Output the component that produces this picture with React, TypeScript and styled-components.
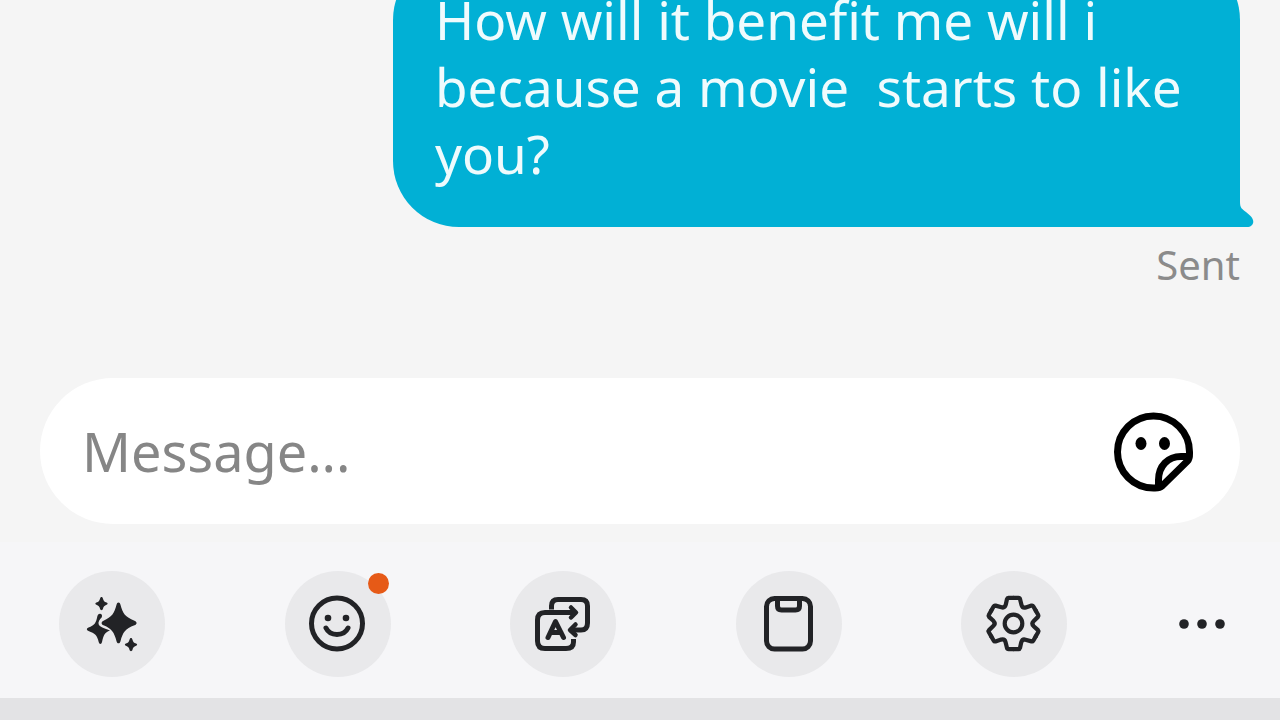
import React from "react";
import styled, { createGlobalStyle } from "styled-components";

const GlobalStyle = createGlobalStyle`
  *, *::before, *::after { box-sizing: border-box; }
  body {
    margin: 0;
    background: #f5f5f5;
    font-family: "Noto Sans", "Open Sans", sans-serif;
  }
`;

const Screen = styled.div`
  display: flex;
  flex-direction: column;
  height: 100vh;
  overflow: hidden;
`;

const Conversation = styled.main`
  flex: 1;
  min-height: 0;
  display: flex;
  flex-direction: column;
  justify-content: flex-end;
  align-items: flex-end;
  padding: 0 40px 85px;
  overflow: hidden;
`;

const Bubble = styled.div`
  position: relative;
  flex: none;
  max-width: 847px;
  padding: 32px 42px 40px;
  border-radius: 66px 66px 0 66px;
  background: #01b0d5;
`;

const BubbleText = styled.p`
  margin: 0;
  color: #effbfd;
  font-size: 53px;
  line-height: 67px;
  white-space: pre-wrap;
`;

const BubbleTail = styled.svg`
  position: absolute;
  right: -14px;
  bottom: 0;
`;

const Status = styled.span`
  flex: none;
  margin-top: 10px;
  color: #8b8b8b;
  font-size: 40px;
  line-height: 56px;
`;

const Composer = styled.form`
  flex: none;
  display: flex;
  align-items: center;
  height: 146px;
  margin: 0 40px;
  padding: 0 44px 0 42px;
  border-radius: 73px;
  background: #ffffff;
`;

const MessageInput = styled.input`
  flex: 1;
  min-width: 0;
  padding: 0;
  border: 0;
  outline: 0;
  background: transparent;
  color: #222222;
  font: inherit;
  font-size: 54px;
  line-height: 74px;
  &::placeholder { color: #868686; opacity: 1; }
`;

const PlainButton = styled.button`
  display: flex;
  align-items: center;
  justify-content: center;
  padding: 0;
  border: 0;
  background: transparent;
  color: #000000;
`;

const Toolbar = styled.div`
  flex: none;
  display: flex;
  align-items: center;
  gap: 105px;
  margin-top: 18px;
  padding: 29px 48px 21px 59px;
  background: #f6f6f8;
`;

const ToolGroup = styled.div`
  flex: 1;
  display: flex;
  justify-content: space-between;
`;

const ToolButton = styled(PlainButton)`
  position: relative;
  width: 106px;
  height: 106px;
  border-radius: 50%;
  background: #e9e9eb;
  color: #222326;
`;

const MoreButton = styled(PlainButton)`
  width: 60px;
  height: 106px;
  color: #222326;
`;

const Badge = styled.span`
  position: absolute;
  top: 2px;
  right: 2px;
  width: 21px;
  height: 21px;
  border-radius: 50%;
  background: #e65a17;
`;

const KeyboardEdge = styled.div`
  flex: none;
  height: 22px;
  background: #e3e3e5;
`;

const iconProps = {
  width: 60,
  height: 60,
  viewBox: "0 0 60 60",
  fill: "none",
  stroke: "currentColor",
  strokeWidth: 5,
  strokeLinecap: "round" as const,
  strokeLinejoin: "round" as const,
  "aria-hidden": true,
};

const StickerIcon = () => (
  <svg width="84" height="84" viewBox="0 -1 84 84" fill="none" stroke="currentColor" strokeWidth="7" strokeLinejoin="round" aria-hidden="true">
    <path d="M77.500 42A36 36 0 1 0 41.500 78C44 78 47.500 78.500 50 76L75.500 51C78 48.500 77.500 45 77.500 42Z" />
    <path d="M46.500 77V70C46.500 56 56 46.500 69 46.500H77" />
    <ellipse cx="29" cy="33.500" rx="5.500" ry="6.500" fill="currentColor" stroke="none" />
    <ellipse cx="52.500" cy="33.500" rx="5.500" ry="6.500" fill="currentColor" stroke="none" />
  </svg>
);

const SparklesIcon = () => (
  <svg {...iconProps} viewBox="-1 0 60 60" fill="currentColor" stroke="none">
    <path d="M35.500 8.500C36.600 8.500 37 9.400 37.400 10.600C40 20 42 23 51.500 26.700C54.300 27.800 54.300 30.200 51.500 31.300C42 35 40 38 37.400 47.400C36.700 50 34.300 50 33.600 47.400C31 38 29 35 20.500 31.300C18 30.200 18 27.800 20.500 26.700C29 23 31 20 33.600 10.600C34 9.400 34.400 8.500 35.500 8.500Z" />
    <path d="M17 19.800C18.600 19.800 19.500 21.300 18.800 23.200C16.500 25.500 15 28 15.600 30C16.200 32.500 20 34 27 36.500C21.500 38.500 20.500 41.500 19 48C18.500 50.500 16.300 50.500 15.700 48C14 41 12 39.500 5.500 37C3.300 36 3.300 34.500 5.500 33.500C11.500 31.500 13 29 14.300 22.500C14.600 21 15.500 19.800 17 19.800Z" />
    <path d="M18.500 3C19.300 3 19.700 3.600 19.900 4.500C20.600 7 21.300 7.700 23.600 8.500C25 9 25 10.300 23.600 10.800C21.300 11.600 20.600 12.500 19.900 15C19.500 16.500 17.500 16.500 17.100 15C16.400 12.500 15.700 11.600 13.400 10.800C12 10.300 12 9 13.400 8.500C15.700 7.700 16.400 7 17.100 4.500C17.300 3.600 17.700 3 18.500 3Z" />
    <path d="M48 44C48.800 44 49.200 44.600 49.400 45.500C50.100 48 50.800 48.700 53.100 49.500C54.500 50 54.500 51.300 53.100 51.800C50.800 52.600 50.100 53.500 49.400 56C49 57.500 47 57.500 46.600 56C45.900 53.500 45.200 52.600 42.900 51.800C41.500 51.300 41.500 50 42.900 49.500C45.200 48.700 45.900 48 46.600 45.500C46.800 44.600 47.200 44 48 44Z" />
  </svg>
);

const SmileIcon = () => (
  <svg {...iconProps}>
    <circle cx="29" cy="29.500" r="25.500" />
    <path d="M18 34C22 42.500 36 42.500 40 34" />
    <circle cx="20" cy="24" r="3.300" fill="currentColor" stroke="none" />
    <circle cx="38" cy="24" r="3.300" fill="currentColor" stroke="none" />
  </svg>
);

const TranslateIcon = () => (
  <svg {...iconProps}>
    <path strokeLinecap="butt" d="M18.500 15.500V12Q18.500 5.500 25 5.500H48Q54.500 5.500 54.500 12V29Q54.500 36 48 36H38" />
    <path strokeWidth="4.500" d="M42.500 30.500L37 36L42.500 41" />
    <path strokeLinecap="butt" d="M42 18.500H12Q4.500 18.500 4.500 26V47Q4.500 54.500 12 54.500H33Q40.500 54.500 40.500 48V45" />
    <path strokeWidth="4.500" d="M38 13.500L43 18.500L38 23.500" />
    <path d="M15 43.500L22.500 27.500L30.500 43.500M18 38.500H28" />
  </svg>
);

const ClipboardIcon = () => (
  <svg {...iconProps}>
    <rect x="7.500" y="4.500" width="44" height="50.500" rx="8" />
    <path d="M18.500 5V12Q18.500 16 22.500 16H36.500Q40.500 16 40.500 12V5" />
  </svg>
);

const gearTooth =
  "M0 -25.700H5Q6.200 -25.700 6.500 -24.500L8 -18.500Q8.800 -15.300 12.400 -16.100L18 -17.900Q19.200 -18.200 19.750 -17.180L22.250 -12.850";

const SettingsIcon = () => (
  <svg {...iconProps} strokeWidth="4.200">
    {[0, 60, 120, 180, 240, 300].map((angle) => (
      <path key={angle} d={gearTooth} transform={`translate(29.500 29.500) rotate(${angle})`} />
    ))}
    <circle cx="29.500" cy="29.500" r="8.800" />
  </svg>
);

const MoreIcon = () => (
  <svg width="60" height="20" viewBox="0 0 60 20" fill="currentColor" aria-hidden="true">
    <circle cx="12" cy="10" r="4.800" />
    <circle cx="30" cy="10" r="4.800" />
    <circle cx="48" cy="10" r="4.800" />
  </svg>
);

const tools = [
  { label: "Writing assistant", Icon: SparklesIcon },
  { label: "Emoji", Icon: SmileIcon, badge: true },
  { label: "Translate", Icon: TranslateIcon },
  { label: "Clipboard", Icon: ClipboardIcon },
  { label: "Keyboard settings", Icon: SettingsIcon },
];

export default function App() {
  return (
    <>
      <GlobalStyle />
      <Screen>
        <Conversation>
          <Bubble>
            <BubbleText>{"How will it benefit me will i because a movie  starts to like you?"}</BubbleText>
            <BubbleTail width="15" height="30" viewBox="0 0 15 30" aria-hidden="true">
              <path d="M0 0H1V5C1 11 3 12 7 15L11 18.500C17 24 14 30 8 30H0Z" fill="#01b0d5" />
            </BubbleTail>
          </Bubble>
          <Status>Sent</Status>
        </Conversation>
        <Composer onSubmit={(event) => event.preventDefault()}>
          <MessageInput type="text" placeholder="Message..." aria-label="Message" />
          <PlainButton type="button" aria-label="Stickers">
            <StickerIcon />
          </PlainButton>
        </Composer>
        <Toolbar role="toolbar" aria-label="Keyboard tools">
          <ToolGroup>
            {tools.map(({ label, Icon, badge }) => (
              <ToolButton key={label} type="button" aria-label={label}>
                <Icon />
                {badge && <Badge />}
              </ToolButton>
            ))}
          </ToolGroup>
          <MoreButton type="button" aria-label="More">
            <MoreIcon />
          </MoreButton>
        </Toolbar>
        <KeyboardEdge />
      </Screen>
    </>
  );
}
